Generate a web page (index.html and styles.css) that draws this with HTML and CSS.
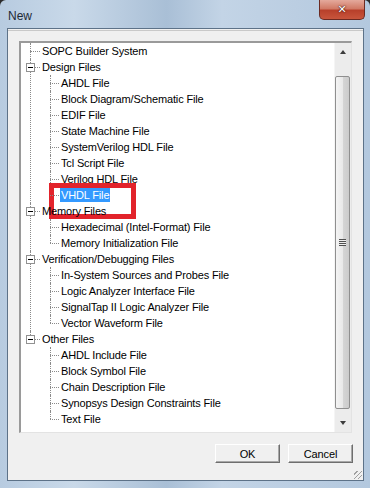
FILE: index.html
```html
<!DOCTYPE html>
<html lang="en">
<head>
    <meta charset="UTF-8">
    <title>New</title>
    <link rel="stylesheet" href="styles.css">
</head>
<body>
    <div class="window">
        <div class="titlebar">
            <span class="title">New</span>
            <button class="close-button">&#x2715;</button>
        </div>
        <div class="client">
            <div class="panel">
                <div class="tree-box">
                    <ul class="tree">
                        <li><span class="label">SOPC Builder System</span></li>
                        <li class="branch"><span class="toggle"></span><span class="label">Design Files</span>
                            <ul>
                                <li><span class="label">AHDL File</span></li>
                                <li><span class="label">Block Diagram/Schematic File</span></li>
                                <li><span class="label">EDIF File</span></li>
                                <li><span class="label">State Machine File</span></li>
                                <li><span class="label">SystemVerilog HDL File</span></li>
                                <li><span class="label">Tcl Script File</span></li>
                                <li><span class="label">Verilog HDL File</span></li>
                                <li class="marked"><span class="label selected">VHDL File</span></li>
                            </ul>
                        </li>
                        <li class="branch"><span class="toggle"></span><span class="label">Memory Files</span>
                            <ul>
                                <li><span class="label">Hexadecimal (Intel-Format) File</span></li>
                                <li><span class="label">Memory Initialization File</span></li>
                            </ul>
                        </li>
                        <li class="branch"><span class="toggle"></span><span class="label">Verification/Debugging Files</span>
                            <ul>
                                <li><span class="label">In-System Sources and Probes File</span></li>
                                <li><span class="label">Logic Analyzer Interface File</span></li>
                                <li><span class="label">SignalTap II Logic Analyzer File</span></li>
                                <li><span class="label">Vector Waveform File</span></li>
                            </ul>
                        </li>
                        <li class="branch"><span class="toggle"></span><span class="label">Other Files</span>
                            <ul>
                                <li><span class="label">AHDL Include File</span></li>
                                <li><span class="label">Block Symbol File</span></li>
                                <li><span class="label">Chain Description File</span></li>
                                <li><span class="label">Synopsys Design Constraints File</span></li>
                                <li><span class="label">Text File</span></li>
                            </ul>
                        </li>
                    </ul>
                    <div class="scrollbar">
                        <div class="arrow up"></div>
                        <div class="track">
                            <div class="thumb"><span class="grip"></span></div>
                        </div>
                        <div class="arrow down"></div>
                    </div>
                </div>
                <div class="buttons">
                    <button class="btn">OK</button>
                    <button class="btn">Cancel</button>
                </div>
                <div class="grip-corner"></div>
            </div>
        </div>
    </div>
</body>
</html>
```

FILE: styles.css
```css
* {
    margin: 0;
    padding: 0;
    box-sizing: border-box;
}

body {
    width: 370px;
    height: 488px;
    overflow: hidden;
    font-family: 'Liberation Sans', Arial, sans-serif;
    background: #2b2b2b;
}

.window {
    width: 370px;
    height: 488px;
    display: flex;
    flex-direction: column;
    padding: 0 6px 7px 7px;
    background: linear-gradient(90deg, #b7cbe0 0%, #c9d9e9 20%, #a9bfd6 45%, #c3d4e6 60%, #b3c8de 100%);
    border-radius: 6px 6px 0 0;
}

.titlebar {
    height: 28px;
    display: flex;
    align-items: flex-start;
}

.title {
    font-size: 12px;
    color: #1e2a36;
    margin-top: 9px;
    margin-left: 1px;
}

.close-button {
    margin-left: auto;
    margin-right: -1px;
    width: 46px;
    height: 20px;
    border: 1px solid #6b2a22;
    border-top: none;
    border-radius: 0 0 5px 5px;
    background: linear-gradient(180deg, #e4a99c 0%, #d17a66 45%, #b8402b 55%, #c8553c 100%);
    color: #fff;
    font-family: 'DejaVu Sans', sans-serif;
    font-size: 11px;
    font-weight: bold;
    text-shadow: 0 0 2px #3d1008, 0 0 1px #3d1008;
}

.client {
    flex: 1;
    background: #f0f0f0;
    border: 1px solid #5d7288;
    padding: 1px 0 0 0;
}

.panel {
    height: 100%;
    display: flex;
    flex-direction: column;
    border-top: 1px solid #c9c9c9;
    position: relative;
}

.tree-box {
    margin: 10px 11px 0 11px;
    height: 392px;
    display: flex;
    background: #fff;
    border-top: 2px solid #9a9a9a;
    border-left: 2px solid #9a9a9a;
    border-right: 1px solid #e3e3e3;
    border-bottom: 1px solid #e3e3e3;
}

.tree {
    flex: 1;
    list-style: none;
    font-size: 11px;
    letter-spacing: -0.15px;
    color: #000;
    overflow: hidden;
}

.tree ul {
    list-style: none;
}

.tree li {
    position: relative;
    line-height: 16px;
}

.tree > li::before,
.tree ul > li::before {
    content: '';
    position: absolute;
    top: 0;
    bottom: 0;
    border-left: 1px dotted #8a8a8a;
}

.tree > li::after,
.tree ul > li::after {
    content: '';
    position: absolute;
    top: 8px;
    border-top: 1px dotted #8a8a8a;
}

.tree > li::before {
    left: 9px;
}

.tree > li::after {
    left: 9px;
    width: 10px;
}

.tree > li:last-child::before {
    bottom: auto;
    height: 8px;
}

.tree ul > li::before {
    left: 29px;
}

.tree ul > li::after {
    left: 29px;
    width: 9px;
}

.tree ul > li:last-child::before {
    bottom: auto;
    height: 8px;
}

.label {
    display: inline-block;
    margin-left: 20px;
    padding: 0 1px;
    line-height: 14px;
    margin-top: 1px;
    margin-bottom: 1px;
    vertical-align: top;
    white-space: nowrap;
}

.tree ul .label {
    margin-left: 39px;
}

.label.selected {
    background: #3399ff;
    color: #fff;
}

.toggle {
    position: absolute;
    left: 5px;
    top: 4px;
    width: 9px;
    height: 9px;
    border: 1px solid #919191;
    background: #fff;
    z-index: 1;
}

.toggle::after {
    content: '';
    position: absolute;
    left: 1px;
    top: 3px;
    width: 5px;
    height: 1px;
    background: #000;
}

.marked .label {
    position: relative;
}

.marked .label::before {
    content: '';
    position: absolute;
    left: -11px;
    top: -5px;
    width: 77px;
    height: 26px;
    border: 5px solid #e2232b;
}

.scrollbar {
    width: 17px;
    display: flex;
    flex-direction: column;
    background: #ececec;
    border-left: 1px solid #f5f5f5;
}

.arrow {
    height: 17px;
    position: relative;
}

.arrow::after {
    content: '';
    position: absolute;
    left: 5px;
    border-left: 3.5px solid transparent;
    border-right: 3.5px solid transparent;
}

.arrow.up::after {
    top: 7px;
    border-bottom: 4px solid #3c3c3c;
}

.arrow.down::after {
    top: 6px;
    border-top: 4px solid #3c3c3c;
}

.track {
    flex: 1;
    padding: 16px 0 6px 0;
    display: flex;
}

.thumb {
    flex: 1;
    margin: 0 1px 0 0;
    border: 1px solid #8f8f8f;
    border-radius: 2px;
    background: linear-gradient(90deg, #f4f4f4 0%, #e9e9e9 50%, #d6d6d6 51%, #cbcbcb 100%);
    display: flex;
    align-items: center;
    justify-content: center;
}

.grip {
    width: 7px;
    height: 7px;
    background: repeating-linear-gradient(180deg, #505050 0 1px, #eeeeee 1px 2px);
}

.buttons {
    display: flex;
    justify-content: flex-end;
    gap: 8px;
    margin-top: 11px;
    padding-right: 10px;
}

.btn {
    width: 65px;
    height: 19px;
    font-family: 'Liberation Sans', Arial, sans-serif;
    font-size: 11px;
    letter-spacing: -0.15px;
    color: #000;
    background: #f0f0f0;
    border-top: 1px solid #ffffff;
    border-left: 1px solid #ffffff;
    border-right: 1px solid #6e6e6e;
    border-bottom: 1px solid #6e6e6e;
    box-shadow: inset -1px -1px 0 #a8a8a8;
}

.grip-corner {
    position: absolute;
    right: 1px;
    bottom: 1px;
    width: 8px;
    height: 8px;
    background: repeating-linear-gradient(135deg, transparent 0 2px, #a0a0a0 2px 3px);
}
```
